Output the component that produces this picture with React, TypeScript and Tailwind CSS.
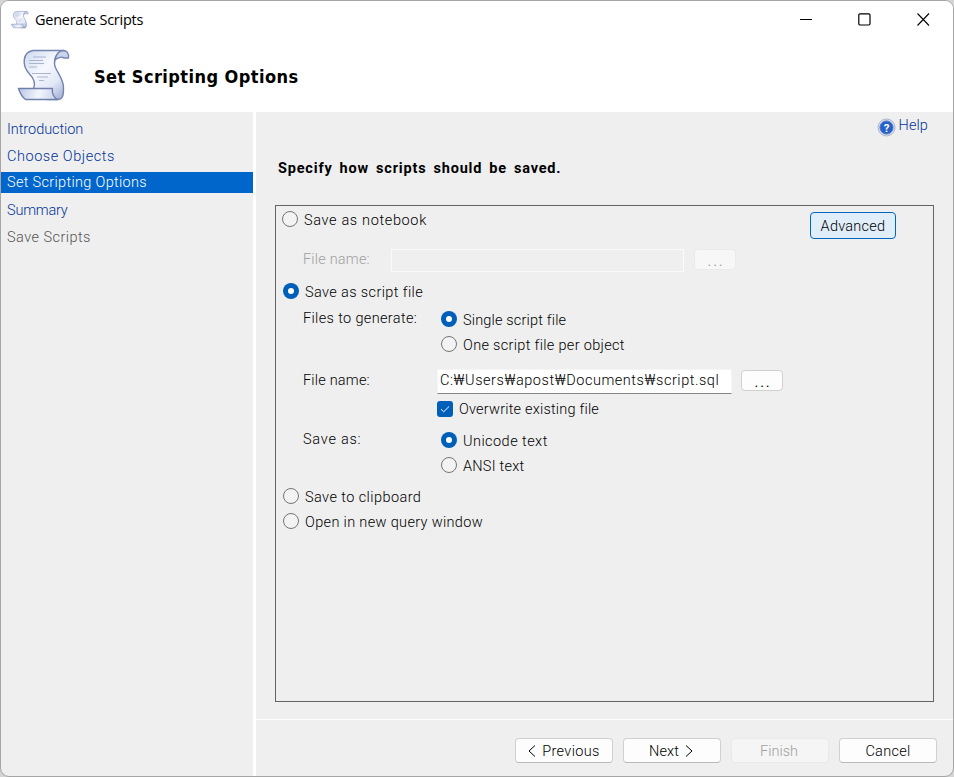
import React from "react";

function Scroll({ size }: { size: number }) {
  return (
    <svg width={size} height={size} viewBox="0 0 54 54" fill="none" className="shrink-0">
      <defs>
        <linearGradient id="paper" x1="8" y1="6" x2="46" y2="48" gradientUnits="userSpaceOnUse">
          <stop stopColor="#d3dcf1" />
          <stop offset="0.4" stopColor="#f6f8fe" />
          <stop offset="0.72" stopColor="#e2e8f7" />
          <stop offset="1" stopColor="#a3afd6" />
        </linearGradient>
        <linearGradient id="fold" x1="2" y1="42" x2="40" y2="52" gradientUnits="userSpaceOnUse">
          <stop stopColor="#bcc8e6" />
          <stop offset="0.5" stopColor="#f3f6fd" />
          <stop offset="1" stopColor="#c5cfe8" />
        </linearGradient>
      </defs>
      <path
        d="M16 1.5H47C41 2 37 8 37.5 15C38 22 46.5 28 46.5 39C46.5 46 46 50.5 41 50.5H30L16.5 39.5C19 34 17.5 30 12.5 25C4 16 6 3 16 1.5Z"
        fill="url(#paper)"
        stroke="#7484ae"
        strokeWidth="1.4"
        strokeLinejoin="round"
      />
      <path d="M46 1.5C50 1.5 52 4 51.5 9H46.5C46 7.5 41 8 38 11C39 6 42 2 46 1.5Z" fill="#c9d3ec" stroke="#7484ae" strokeWidth="1.3" strokeLinejoin="round" />
      <path d="M1.5 39.5H35.5C34.5 44 37 49.5 41 50.5H8.5C5 48 3 44 1.5 39.5Z" fill="url(#fold)" stroke="#7180aa" strokeWidth="1.4" strokeLinejoin="round" />
      <path d="M16 8H29M12 11.5H26M12 14.5H27M12 18H20M15 24.5H34M20 28H31M22 31.5H27" stroke="#a9b5cd" strokeWidth="1" />
    </svg>
  );
}

function Radio({ on = false }: { on?: boolean }) {
  return on ? (
    <span className="flex size-4 shrink-0 items-center justify-center rounded-full bg-[#005fb8]">
      <span className="size-1.5 rounded-full bg-white" />
    </span>
  ) : (
    <span className="size-4 shrink-0 rounded-full border border-[#757575] bg-[#f3f3f3]" />
  );
}

function Option({ label, tracking, on, className = "" }: { label: string; tracking: string; on?: boolean; className?: string }) {
  return (
    <div className={`flex h-[25px] items-center gap-1.5 ${className}`}>
      <Radio on={on} />
      <span className={`pt-[5px] ${tracking}`}>{label}</span>
    </div>
  );
}

const push =
  "flex h-[25px] w-[98px] shrink-0 items-center justify-center rounded border border-[#d0d0d0] border-b-[#b9b9b9] bg-[#fdfdfd] pt-0.5";

export default function App() {
  return (
    <div className="h-[777px] w-[954px] overflow-hidden bg-[#d4d4d4]">
      <div className="flex h-full flex-col overflow-hidden rounded-[9px] border border-[#a5a5a5] bg-[#efefef] font-['Roboto','Noto_Sans_CJK_KR',sans-serif] text-[14.5px] leading-5 font-light whitespace-nowrap text-black">
        <header className="h-[111px] shrink-0 bg-white">
          <div className="flex h-[38px] items-center pl-2.5">
            <Scroll size={18} />
            <span className="ml-1.5 font-['Open_Sans',sans-serif] text-[14.5px] font-normal tracking-[-0.26px]">Generate Scripts</span>
            <div className="mr-[23px] ml-auto flex items-center gap-[46px] pb-0.5">
              <svg width="13" height="13" viewBox="0 0 13 13" stroke="#000" strokeWidth="1"><path d="M1 6.5H13" /></svg>
              <svg width="13" height="13" viewBox="0 0 13 13" fill="none" stroke="#000" strokeWidth="1.2"><rect x="0.8" y="0.8" width="11.2" height="11.2" rx="1.2" /></svg>
              <svg width="13" height="13" viewBox="0 0 13 13" stroke="#000" strokeWidth="1.1"><path d="M.5.5L12 12.5M12 .5L.5 12.5" /></svg>
            </div>
          </div>
          <div className="flex items-center pt-2.5 pl-4">
            <Scroll size={54} />
            <h1 className="ml-[23px] pt-0.5 font-['DejaVu_Sans_Condensed','DejaVu_Sans',sans-serif] text-[18px] leading-6 font-bold tracking-[0.44px]">Set Scripting Options</h1>
          </div>
        </header>
        <div className="flex min-h-0 flex-1">
          <nav className="w-[252px] shrink-0 pt-1 text-[#003399]">
            <div className="flex h-[27px] items-center pl-1.5 tracking-[-0.05px]">Introduction</div>
            <div className="flex h-[27px] items-center pl-1.5 tracking-[0.55px]">Choose Objects</div>
            <div className="flex h-[27px] items-start pt-0.5">
              <span className="flex h-[21px] w-full items-center bg-[#0066cc] pt-px pl-1.5 tracking-[0.32px] text-white">Set Scripting Options</span>
            </div>
            <div className="flex h-[27px] items-center pl-1.5 tracking-[-0.2px]">Summary</div>
            <div className="flex h-[27px] items-center pl-1.5 tracking-[0.45px] text-[#555]">Save Scripts</div>
          </nav>
          <div className="w-[3px] shrink-0 bg-white" />
          <div className="flex min-w-0 flex-1 flex-col">
            <main className="h-[607px] shrink-0 pr-[19px] pl-[19px]">
              <div className="flex h-[27px] items-center justify-end gap-[3px] pr-1.5 text-[#003399]">
                <svg width="19" height="19" viewBox="0 0 19 19" className="mt-[3px]">
                  <circle cx="9.5" cy="9.5" r="8.5" fill="#dce2ee" stroke="#aab4c8" />
                  <circle cx="9.5" cy="9.5" r="6.6" fill="#2860c8" stroke="#5680cf" />
                  <text x="9.5" y="13.7" textAnchor="middle" fill="#fff" fontSize="11.5" fontWeight="700" fontFamily="Roboto">?</text>
                </svg>
                <span className="tracking-[0.1px]">Help</span>
              </div>
              <h2 className="flex h-[66px] items-start pt-5 pl-[3px] text-[14.5px] font-bold tracking-[0.82px] [word-spacing:2.6px]">
                Specify how scripts should be saved.
              </h2>
              <section className="h-[497px] border border-[#646464]">
                <div className="flex h-[38px] items-start justify-between pr-[37px]">
                  <Option label="Save as notebook" tracking="tracking-[0.65px]" className="ml-1.5" />
                  <button className="mt-1.5 flex h-[27px] w-[86px] items-center justify-center rounded border border-[#0067c0] bg-[#e0eef9] pt-0.5 tracking-[0.25px]">Advanced</button>
                </div>
                <div className="flex h-[34px] items-start pt-[5px] text-[#a0a0a0]">
                  <span className="ml-[27px] w-[88px] pt-px tracking-[0.2px]">File name:</span>
                  <span className="h-[23px] w-[293px] border border-[#fafafa]" />
                  <span className="ml-2.5 flex h-[21px] w-[42px] items-center justify-center rounded border border-[#eaeaea] bg-[#f7f7f7] pt-1 pl-0.5 font-normal tracking-[1.8px]">...</span>
                </div>
                <Option label="Save as script file" tracking="tracking-[0.38px]" on className="ml-[7px]" />
                <div className="mt-[3px] flex h-[25px]">
                  <span className="ml-[27px] w-[138px] pt-[3px] tracking-[0.35px]">Files to generate:</span>
                  <Option label="Single script file" tracking="tracking-[0.17px]" on />
                </div>
                <Option label="One script file per object" tracking="tracking-[0.32px]" className="ml-[165px]" />
                <div className="mt-[13px] flex h-[25px] items-start">
                  <span className="ml-[27px] w-[134px] pt-0.5 tracking-[0.2px]">File name:</span>
                  <span className="h-[25px] w-[295px] border border-[#f5f5f5] border-b-[#858585] bg-white pt-px pl-0.5 tracking-[0.54px]">C:₩Users₩apost₩Documents₩script.sql</span>
                  <span className="mt-px ml-[9px] flex h-[21px] w-[42px] items-center justify-center rounded border border-[#d0d0d0] bg-[#fdfdfd] pt-1 pl-0.5 font-normal tracking-[1.8px]">...</span>
                </div>
                <div className="mt-[3px] ml-[161px] flex h-6 items-center gap-1.5">
                  <svg width="16" height="16" viewBox="0 0 16 16" fill="none"><rect width="16" height="16" rx="3" fill="#005fb8" /><path d="M4 8.2L6.7 10.8L12 5.5" stroke="#fff" /></svg>
                  <span className="pt-0.5 tracking-[0.2px]">Overwrite existing file</span>
                </div>
                <div className="mt-[6px] flex h-[25px]">
                  <span className="ml-[27px] w-[138px] pt-[3px] tracking-[0.75px]">Save as:</span>
                  <Option label="Unicode text" tracking="tracking-[0.45px]" on />
                </div>
                <Option label="ANSI text" tracking="tracking-[0.25px]" className="ml-[165px]" />
                <Option label="Save to clipboard" tracking="tracking-[0.42px]" className="mt-1.5 ml-[7px]" />
                <Option label="Open in new query window" tracking="tracking-[0.34px]" className="ml-[7px]" />
              </section>
            </main>
            <footer className="flex flex-1 items-start justify-end gap-2.5 border-t border-white pt-[18px] pr-4">
              <button className={push}>
                <svg width="8" height="12" viewBox="0 0 8 12" fill="none" stroke="#000" className="mr-1.5 mb-0.5"><path d="M7 .5L1 6L7 11.5" /></svg>
                <span className="tracking-[0.35px]">Previous</span>
              </button>
              <button className={push}>
                <span className="tracking-[0.15px]">Next</span>
                <svg width="8" height="12" viewBox="0 0 8 12" fill="none" stroke="#000" className="mr-0.5 mb-0.5 ml-1.5"><path d="M1 .5L7 6L1 11.5" /></svg>
              </button>
              <button className="flex h-[25px] w-[98px] items-center justify-center rounded border border-[#eaeaea] bg-[#f5f5f5] pt-0.5 pr-0.5 text-[#a0a0a0]">Finish</button>
              <button className={push}><span className="tracking-[0.3px]">Cancel</span></button>
            </footer>
          </div>
        </div>
      </div>
    </div>
  );
}
